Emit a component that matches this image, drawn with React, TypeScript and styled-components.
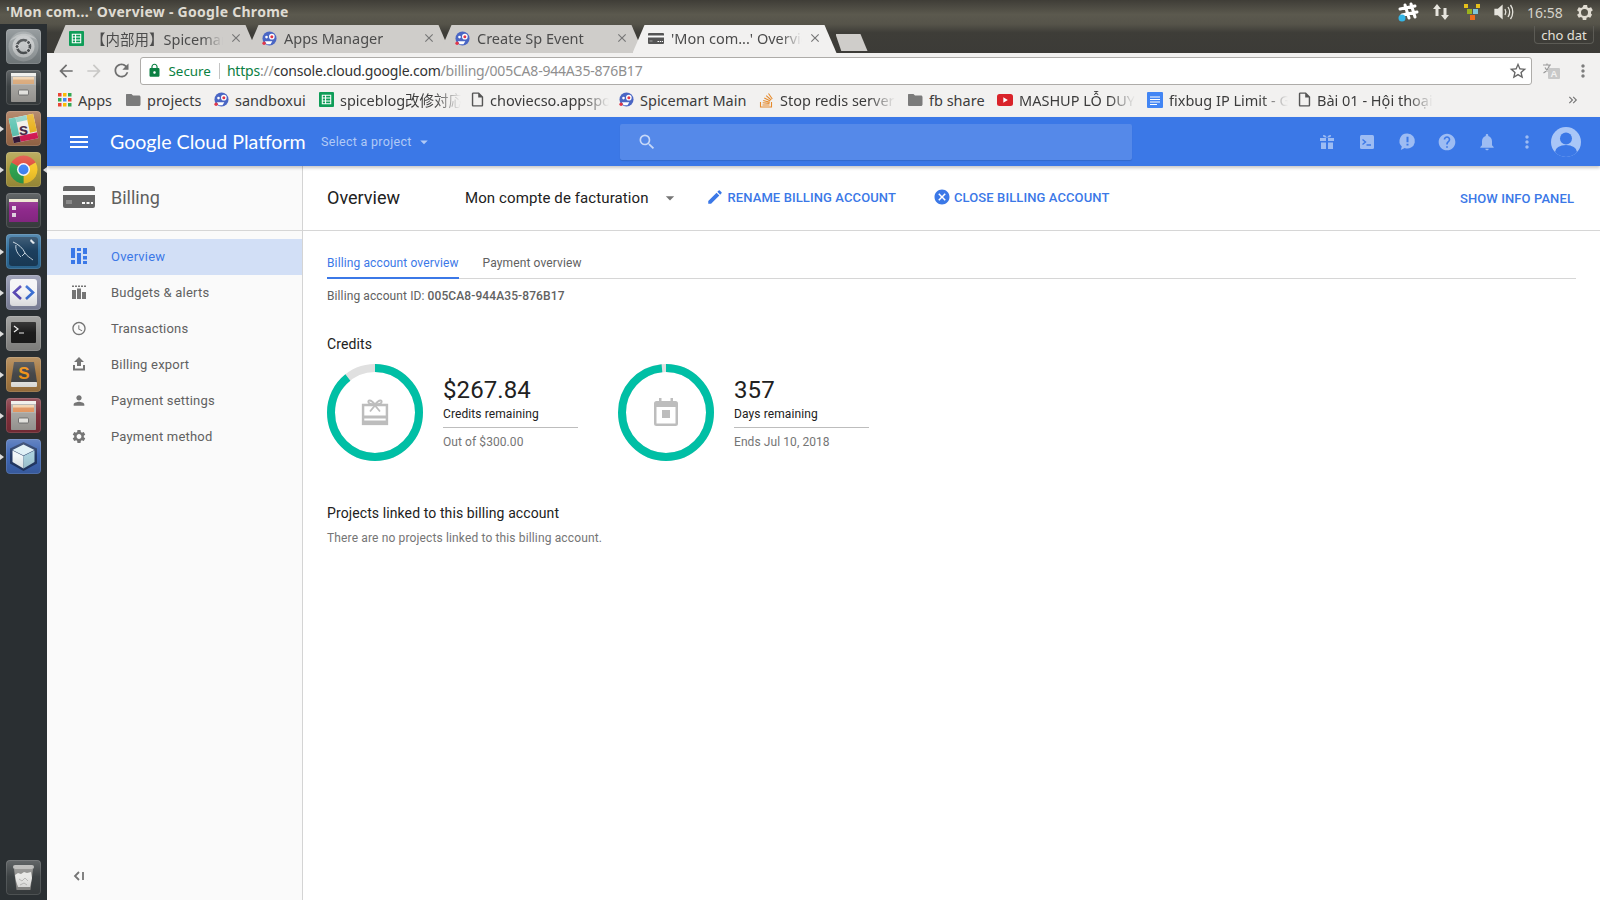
import React from "react";
import styled, { createGlobalStyle } from "styled-components";
import {
  MdMenu, MdSearch, MdNotifications, MdHelp, MdMoreVert, MdPerson, MdSettings, MdAccessTime,
  MdEdit, MdCancel, MdArrowDropDown, MdStarBorder, MdLock, MdArrowBack, MdArrowForward, MdRefresh,
  MdFolder, MdClose, MdKeyboardDoubleArrowRight, MdOutlineInsertDriveFile,
} from "react-icons/md";

const Global = createGlobalStyle`
  html, body { margin: 0; padding: 0; width: 1600px; height: 900px; overflow: hidden; background: #fff; }
  * { box-sizing: border-box; }
  #root { width: 1600px; height: 900px; }
`;

const UI = `"Noto Sans", "Noto Sans CJK SC", "Open Sans", sans-serif`;
const RB = `Roboto, "Liberation Sans", sans-serif`;

const Page = styled.div`display: flex; flex-direction: column; width: 1600px; height: 900px; overflow: hidden;`;
const TitleBar = styled.div`
  height: 24px; flex: none; display: flex; align-items: center; padding: 0 1px 2px 6px;
  background: linear-gradient(#3f3d37, #5b594e 60%, #56544a);
  color: #dfdbd2; font: 700 14px ${UI}; letter-spacing: .28px;
`;
const WindowTitle = styled.div`flex: 1; white-space: nowrap;`;
const Tray = styled.div`display: flex; align-items: center; width: 208px; flex: none; color: #dfdbd2; letter-spacing: 0; padding-top: 2px;`;
const TraySlot = styled.span<{ $w: number }>`display: flex; justify-content: center; align-items: center; flex: none; width: ${p => p.$w}px;`;
const Clock = styled.span`font: 400 14px ${UI}; color: #d6d3ca; white-space: nowrap;`;
const Body = styled.div`flex: 1; display: flex; min-height: 0;`;
const Launcher = styled.aside`
  width: 47px; flex: none; display: flex; flex-direction: column; align-items: center; gap: 6px;
  padding: 5px 0 5px; background: #2a2f32;
`;
const Tile = styled.div<{ $running?: boolean; $both?: boolean; $end?: boolean }>`
  position: relative; width: 35px; height: 35px; flex: none; ${p => p.$end ? "margin-top: auto;" : ""}
  svg { display: block; border-radius: 4px; }
  &::before {
    content: ${p => p.$running ? '""' : "none"}; position: absolute; left: -6px; top: 15px;
    border: 3px solid transparent; border-left: 4px solid #ddd; border-right: 0;
  }
  &::after {
    content: ${p => p.$both ? '""' : "none"}; position: absolute; right: -6px; top: 15px;
    border: 3px solid transparent; border-right: 4px solid #ddd; border-left: 0;
  }
`;
const TileGloss = styled.span`
  position: absolute; inset: 0; border-radius: 4px; pointer-events: none;
  background: linear-gradient(rgba(255,255,255,.2), rgba(255,255,255,0) 48%, rgba(0,0,0,.14));
  box-shadow: inset 0 0 0 1px rgba(255,255,255,.12);
`;
const Main = styled.div`flex: 1; min-width: 0; display: flex; flex-direction: column;`;
const TabStrip = styled.div`
  height: 29px; flex: none; display: flex; align-items: flex-end; padding-left: 6.5px;
  background: linear-gradient(#56544a, #3e3d38 30%, #3c3b37);
`;
const Tab = styled.div<{ $active?: boolean }>`
  width: 204px; height: 28px; flex: none; margin-right: -11px; display: flex; align-items: center;
  padding: 0 15px 2px 15.5px; position: relative; z-index: ${p => p.$active ? 2 : 1};
  background: ${p => p.$active ? "#f2f1f0" : "#cfcdca"};
  clip-path: polygon(0 100%, 12px 0, calc(100% - 12px) 0, 100% 100%);
  color: #4c4c4c; font: 400 14.5px ${UI};
`;
const TabTitle = styled.span`
  flex: 1; min-width: 0; margin: 0 6px 0 7px; white-space: nowrap; overflow: hidden;
  mask-image: linear-gradient(to right, #000 84%, transparent 100%);
`;
const TabClose = styled.span`display: flex; width: 14px; color: #777; flex: none;`;
const NewTab = styled.div`
  width: 32px; height: 17px; flex: none; margin: 0 0 2px 10px; background: #cfcdca;
  clip-path: polygon(0 0, 78% 0, 100% 100%, 18% 100%); align-self: flex-end;
`;
const UserBox = styled.div`
  margin-left: auto; margin-right: 6px; align-self: flex-start; margin-top: 2px; width: 60px; height: 18px; flex: none;
  border: 1px solid #5c5b55; border-top: 0; border-radius: 0 0 4px 4px;
  display: flex; align-items: center; justify-content: center; color: #e4e1da; font: 400 13px ${UI};
`;
const Toolbar = styled.div`
  height: 35px; flex: none; display: flex; align-items: center; padding: 0 0 0 4.5px; background: #f2f1f0;
`;
const NavBtn = styled.span<{ $dim?: boolean }>`display: flex; justify-content: center; width: 28px; flex: none; color: ${p => p.$dim ? "#c9c8c6" : "#6f6f6f"};`;
const Omnibox = styled.div`
  flex: none; width: 1392px; height: 28px; margin-left: 4px; display: flex; align-items: center;
  background: #fff; border: 1px solid #aeaca9; border-radius: 3px; padding: 0 3px 0 6px;
  font: 400 14px ${UI}; white-space: nowrap;
`;
const Secure = styled.span`color: #0b8043; margin-left: 7px; font-size: 13.4px;`;
const Sep = styled.span`width: 1px; height: 16px; background: #c4c4c4; margin: 0 7px 0 8px; flex: none;`;
const Url = styled.span`flex: 1; color: #8f8f8f; letter-spacing: -.2px;`;
const UrlGreen = styled.span`color: #0b8043;`;
const UrlDark = styled.span`color: #333;`;
const ToolRight = styled.span<{ $gap?: number }>`display: flex; justify-content: center; flex: none; width: 32px; color: #7d7d7d; margin-left: ${p => p.$gap ?? 0}px;`;
const Bookmarks = styled.div`
  height: 29px; flex: none; display: flex; align-items: center; padding: 0 0 6px 11px; background: #f2f1f0;
  font: 400 14.5px ${UI}; color: #3c3c3c;
`;
const Bookmark = styled.div<{ $w: number }>`display: flex; align-items: center; gap: 6px; width: ${p => p.$w}px; flex: none; overflow: hidden; padding-right: 10px;`;
const BookmarkText = styled.span<{ $fade?: boolean }>`
  white-space: nowrap; overflow: hidden; min-width: 0;
  ${p => p.$fade ? "mask-image: linear-gradient(to right, #000 78%, transparent 100%);" : ""}
`;
const BookmarkMore = styled.span`margin-left: auto; margin-right: 20px; display: flex; color: #777;`;
const CloudBar = styled.header`
  height: 49px; flex: none; display: flex; align-items: center; background: #3b78e7; position: relative; z-index: 3;
  box-shadow: 0 2px 3px rgba(0,0,0,.22); color: #fff;
`;
const Burger = styled.span`display: flex; width: 63px; flex: none; justify-content: center; color: #fff;`;
const Logo = styled.div`font: 400 19.6px Lato, sans-serif; width: 211px; flex: none; white-space: nowrap;`;
const ProjectPicker = styled.div`display: flex; align-items: center; gap: 3px; width: 299px; flex: none; color: #b1caf6; font: 400 12.5px ${RB}; letter-spacing: .3px;`;
const SearchBox = styled.div`
  width: 512px; height: 36px; flex: none; background: #5589e9; border-radius: 2px; display: flex; align-items: center;
  padding-left: 17px; color: #c6d8f8; box-shadow: 0 1px 1px rgba(0,0,0,.12);
`;
const CloudIcons = styled.div`flex: 1; display: flex; align-items: center; justify-content: flex-end; padding-right: 20px; color: #9dbcf3;`;
const CloudIcon = styled.span`display: flex; width: 40px; justify-content: center; flex: none;`;
const Avatar = styled.span`display: flex; margin-left: 4px; flex: none; width: 30px; height: 30px; margin-right: -1px;`;
const Workspace = styled.div`flex: 1; min-height: 0; display: flex;`;
const Sidebar = styled.nav`
  width: 256px; flex: none; display: flex; flex-direction: column; background: #fafafa; border-right: 1px solid #d4d4d4;
`;
const SideHead = styled.div`
  height: 65px; flex: none; display: flex; align-items: center; gap: 16px; padding: 0 0 2px 16px;
  border-bottom: 1px solid #d6d6d6; color: #5f5f5f; font: 400 18px ${RB};
`;
const SideList = styled.div`display: flex; flex-direction: column; padding-top: 8px;`;
const SideItem = styled.div<{ $active?: boolean }>`
  height: 36px; display: flex; align-items: center; padding: 0 0 2px 24px; gap: 24px;
  background: ${p => p.$active ? "#d2dff6" : "transparent"};
  color: ${p => p.$active ? "#3b78e7" : "#616161"}; font: 400 13px ${RB}; letter-spacing: .2px;
`;
const SideIcon = styled.span<{ $active?: boolean }>`display: flex; width: 16px; height: 16px; flex: none; color: ${p => p.$active ? "#3b78e7" : "#757575"};`;
const Collapse = styled.div`margin-top: auto; height: 31px; display: flex; align-items: flex-start; padding: 0 0 0 25px; color: #757575;`;
const Content = styled.main`flex: 1; min-width: 0; display: flex; flex-direction: column;`;
const PageHead = styled.div`
  height: 65px; flex: none; display: flex; align-items: center; padding: 0 26px 2px 24px; border-bottom: 1px solid #d6d6d6;
`;
const PageTitle = styled.h1`margin: 0; width: 138px; flex: none; font: 400 18px ${RB}; color: #212121;`;
const Account = styled.div`display: flex; align-items: center; width: 241px; flex: none; padding-top: 2px; font: 400 15px ${RB}; color: #212121; letter-spacing: .1px;`;
const Caret = styled.span`display: flex; margin-left: 11px; color: #757575;`;
const HeadAction = styled.div<{ $w: number }>`
  display: flex; align-items: center; gap: 3.5px; width: ${p => p.$w}px; flex: none;
  color: #3b78e7; font: 500 13px ${RB}; letter-spacing: .1px; white-space: nowrap;
`;
const InfoPanel = styled.div`margin-left: auto; color: #3b78e7; font: 500 13px ${RB}; letter-spacing: .1px; white-space: nowrap; padding-top: 2px;`;
const Pane = styled.div`padding: 0 24px;`;
const TabBar = styled.div`
  height: 48px; display: flex; align-items: flex-end; gap: 24px; border-bottom: 1px solid #d6d6d6; font: 400 12px ${RB}; letter-spacing: .12px;
`;
const SubTab = styled.div<{ $active?: boolean }>`
  height: 30px; padding-top: 7px; margin-bottom: -1px; color: ${p => p.$active ? "#3b78e7" : "#616161"};
  border-bottom: 2px solid ${p => p.$active ? "#3b78e7" : "transparent"}; white-space: nowrap;
`;
const AccountId = styled.p`margin: 9px 0 0; font: 400 12px/16px ${RB}; color: #616161; letter-spacing: .1px;`;
const AccountIdValue = styled.strong`font-weight: 500;`;
const SectionTitle = styled.h2<{ $top: number }>`margin: ${p => p.$top}px 0 0; font: 400 14px/18px ${RB}; color: #212121; letter-spacing: .1px;`;
const Stats = styled.div`display: flex; margin-top: 11px; gap: 0;`;
const Stat = styled.div`display: flex; width: 291px; flex: none; align-items: flex-start; gap: 20px;`;
const Ring = styled.div`position: relative; width: 96px; height: 97px; flex: none;`;
const RingGlyph = styled.span`
  position: absolute; left: 50%; top: 49%; transform: translate(-50%, -50%); display: flex; color: #bdbdbd;
`;
const StatText = styled.div`width: 135px; padding-top: 12px; flex: none;`;
const StatValue = styled.div`font: 400 24px/28px ${RB}; color: #212121; letter-spacing: .1px;`;
const StatLabel = styled.div`font: 400 12px/16px ${RB}; color: #212121; padding: 2px 0 5px; border-bottom: 1px solid #bdbdbd; letter-spacing: .1px;`;
const StatNote = styled.div`font: 400 12px/16px ${RB}; color: #757575; margin-top: 6px; letter-spacing: .08px;`;
const Empty = styled.p`margin: 8px 0 0; font: 400 12px/16px ${RB}; color: #757575; letter-spacing: .14px;`;

function Spice({ size = 15 }: { size?: number }) {
  return (
    <svg width={size} height={size} viewBox="0 0 16 16" style={{ flex: "none" }}>
      <circle cx="8" cy="8" r="7.5" fill="#4a66c4" />
      <circle cx="10.5" cy="6" r="3" fill="#fff" />
      <circle cx="10.5" cy="6" r="1.6" fill="#e0364a" />
      <circle cx="4.8" cy="6.5" r="1.4" fill="#fff" />
      <path d="M3 11h8l-2 3H5z" fill="#fff" />
      <circle cx="2.2" cy="13" r="1.8" fill="#e0364a" />
    </svg>
  );
}
function Sheet({ size = 15 }: { size?: number }) {
  return (
    <svg width={size} height={size} viewBox="0 0 16 16" style={{ flex: "none" }}>
      <rect width="16" height="16" fill="#0f9d58" rx="1" />
      <path d="M3.500 3.500h9v9h-9zM3.500 6.500h9M3.500 9.500h9M7 3.500v9" stroke="#fff" fill="none" strokeWidth="1.100" />
    </svg>
  );
}
function CardIcon({ w, h, fill }: { w: number; h: number; fill: string }) {
  return (
    <svg width={w} height={h} viewBox="0 0 32 22" style={{ flex: "none" }}>
      <rect width="32" height="22" rx="2" fill={fill} />
      <rect y="5" width="32" height="4" fill="#fafafa" />
      <rect x="3" y="14" width="6" height="4" fill="#fafafa" opacity=".25" />
      <path d="M19 16h3v2h-3zM23.500 16h3v2h-3zM28 16h2v2h-2z" fill="#fafafa" />
    </svg>
  );
}
function Cabinet({ bg, top }: { bg: string; top: string }) {
  return (
    <svg width="35" height="35" viewBox="0 0 35 35">
      <rect width="35" height="35" rx="4" fill={bg} />
      <rect x="5" y="3" width="25" height="29" rx="2" fill="#b4b2ae" />
      <rect x="5" y="3" width="25" height="3" fill="#efeeea" />
      <rect x="7" y="7" width="21" height="7" fill={top} />
      <path d="M7 7h21v2.500H7z" fill="#f1d2ae" />
      <rect x="5" y="15" width="25" height="17" rx="1" fill="#a6a4a0" />
      <rect x="12.500" y="20" width="10" height="5" rx="1" fill="#ecebe7" stroke="#666" strokeWidth=".8" />
    </svg>
  );
}

const launcherIcons: { node: React.ReactNode; run?: boolean; both?: boolean }[] = [
  { node: (
    <svg width="35" height="35" viewBox="0 0 35 35">
      <rect width="35" height="35" rx="4" fill="#80878a" />
      <circle cx="17.500" cy="17.500" r="15" fill="#9aa0a2" />
      <path d="M4 12C10 3 24 2 31 11 24 6 11 7 4 12z" fill="#b9bdbe" />
      <circle cx="17.500" cy="17.500" r="11" fill="#c5c8c9" />
      <circle cx="17.500" cy="17.500" r="6.500" fill="none" stroke="#4e5254" strokeWidth="2.600" />
      <circle cx="22.500" cy="13.500" r="2" fill="#4e5254" stroke="#eee" strokeWidth=".8" />
      <circle cx="22.500" cy="21.500" r="2" fill="#4e5254" stroke="#eee" strokeWidth=".8" />
      <circle cx="11" cy="17.500" r="2" fill="#4e5254" stroke="#eee" strokeWidth=".8" />
    </svg>
  ) },
  { node: <Cabinet bg="#3c4143" top="#d9a878" /> },
  { run: true, node: (
    <svg width="35" height="35" viewBox="0 0 35 35">
      <rect width="35" height="35" rx="4" fill="#a4714f" />
      <g transform="rotate(-12 17.500 17.500)">
        <rect x="5" y="5" width="25" height="25" fill="#f2f0ea" />
        <rect x="5" y="5" width="7" height="18" fill="#62c6b4" />
        <rect x="23" y="5" width="7" height="18" fill="#e9b425" />
        <rect x="12" y="24" width="18" height="6" fill="#df1d5a" />
        <rect x="5" y="24" width="7" height="6" fill="#3b1a3c" />
        <rect x="12" y="5" width="11" height="5" fill="#8dd0c4" />
      </g>
      <text x="17.500" y="24" textAnchor="middle" fontFamily="Liberation Sans" fontWeight="700" fontSize="17" fill="#4a2c4c">s</text>
    </svg>
  ) },
  { both: true, node: (
    <svg width="35" height="35" viewBox="0 0 35 35">
      <rect width="35" height="35" rx="4" fill="#ab9a3f" />
      <path d="M17.500 17.500L5.400 10.500A14 14 0 0 1 29.600 10.500z" fill="#e04a3a" />
      <path d="M17.500 17.500L29.600 10.500A14 14 0 0 1 17.500 31.500z" fill="#f6c82c" />
      <path d="M17.500 17.500L17.500 31.500A14 14 0 0 1 5.400 10.500z" fill="#2fa350" />
      <circle cx="17.500" cy="17.500" r="6.500" fill="#fff" /><circle cx="17.500" cy="17.500" r="5" fill="#4285f4" />
    </svg>
  ) },
  { node: (
    <svg width="35" height="35" viewBox="0 0 35 35">
      <rect width="35" height="35" rx="4" fill="#3f4446" />
      <rect x="3" y="6" width="29" height="23" fill="#8f2a8c" />
      <rect x="3" y="6" width="29" height="3" fill="#ece6cf" />
      <rect x="6" y="13" width="4" height="4" fill="#e6d8e6" /><rect x="6" y="20" width="4" height="4" fill="#e6d8e6" />
    </svg>
  ) },
  { run: true, node: (
    <svg width="35" height="35" viewBox="0 0 35 35">
      <rect width="35" height="35" rx="4" fill="#2f6f9e" />
      <rect x="3" y="3" width="29" height="29" rx="3" fill="#1c3f5e" />
      <path d="M7 8c5 2 10 6 12 11 2 3 4 4 8 7M10 11c-1 5 2 9 5 12M19 19l-3 3" stroke="#c9d6e0" strokeWidth="1" fill="none" />
      <path d="M25 5l4 4-2 1-3-3z" fill="#e0e6ea" />
    </svg>
  ) },
  { run: true, node: (
    <svg width="35" height="35" viewBox="0 0 35 35">
      <rect width="35" height="35" rx="4" fill="#8a8ea8" />
      <rect x="4" y="4" width="27" height="27" rx="3" fill="#f4f4f6" />
      <path d="M15 11l-7 6.500 7 6.500" stroke="#5a49b5" strokeWidth="2.600" fill="none" />
      <path d="M20 11l7 6.500-7 6.500" stroke="#3b6fd4" strokeWidth="2.600" fill="none" />
    </svg>
  ) },
  { run: true, node: (
    <svg width="35" height="35" viewBox="0 0 35 35">
      <rect width="35" height="35" rx="4" fill="#8f8f8d" />
      <rect x="5" y="6" width="25" height="21" rx="1" fill="#1c1c1c" />
      <path d="M8 10l4 3-4 3" stroke="#eee" strokeWidth="1.200" fill="none" /><path d="M13 17h5" stroke="#eee" strokeWidth="1.200" />
    </svg>
  ) },
  { run: true, node: (
    <svg width="35" height="35" viewBox="0 0 35 35">
      <rect width="35" height="35" rx="4" fill="#a87b43" />
      <rect x="5" y="25" width="26" height="5" rx="1" fill="#f0efec" />
      <path d="M8 5h20l3 20H5z" fill="#46484a" />
      <text x="18" y="22" textAnchor="middle" fontFamily="Liberation Sans" fontWeight="700" fontSize="17" fill="#f29318">S</text>
    </svg>
  ) },
  { run: true, node: <Cabinet bg="#7f2f3a" top="#e0925c" /> },
  { run: true, node: (
    <svg width="35" height="35" viewBox="0 0 35 35">
      <rect width="35" height="35" rx="4" fill="#3f67b4" />
      <path d="M17.500 3L31 9.500v15L17.500 32 4 24.500v-15z" fill="#243a66" />
      <path d="M17.500 5.500L28.500 11l-11 5.500-11-5.500z" fill="#dff0f6" />
      <path d="M6.500 11.500l11 5.500v12.500l-11-6.500z" fill="#f1f6f8" />
      <path d="M28.500 11.500l-11 5.500v12.500l11-6.500z" fill="#a9d0dc" />
    </svg>
  ) },
];

const tabs = [
  { icon: <Sheet />, title: "【内部用】Spicemart" },
  { icon: <Spice />, title: "Apps Manager" },
  { icon: <Spice />, title: "Create Sp Event" },
  { icon: <CardIcon w={16} h={11} fill="#555" />, title: "'Mon com...' Overview", active: true },
];

const FileIcon = () => <MdOutlineInsertDriveFile size={17} color="#555" style={{ flex: "none", margin: "0 -2px 0 -2px" }} />;
const FolderIcon = () => <MdFolder size={18} color="#7b7b7b" style={{ flex: "none", margin: "0 -1px 0 -2px" }} />;
const AppsGrid = () => (
  <svg width="14" height="14" viewBox="0 0 14 14" style={{ flex: "none" }}>
    {[0, 5, 10].map(y => [0, 5, 10].map(x => (
      <rect key={`${x}${y}`} x={x} y={y} width="3.500" height="3.500"
        fill={["#ea4335", "#fbbc05", "#34a853", "#4285f4"][(x + y * 2) % 4]} />
    )))}
  </svg>
);
const StackIcon = () => (
  <svg width="15" height="16" viewBox="0 0 15 16" style={{ flex: "none" }}>
    <path d="M1.500 10v5h11v-5M3.500 13h7M3.700 10.800l6.800.6M4.200 8.500l6.600 1.700M5.300 6l6 3M7.200 3.700l5 4.300M9.500 1.500l3.800 5.500" stroke="#e58a2d" strokeWidth="1.100" fill="none" />
  </svg>
);
const YouTube = () => (
  <svg width="16" height="12" viewBox="0 0 16 12" style={{ flex: "none" }}>
    <rect width="16" height="12" rx="2.500" fill="#d9232a" /><path d="M6.300 3.200l4.500 2.800-4.500 2.800z" fill="#fff" />
  </svg>
);
const DocIcon = () => (
  <svg width="16" height="16" viewBox="0 0 16 16" style={{ flex: "none" }}>
    <rect width="16" height="16" fill="#4285f4" rx="1" /><path d="M3 5h10M3 7.500h10M3 10h10M3 12.500h7" stroke="#fff" />
  </svg>
);

const bookmarks = [
  { icon: <AppsGrid />, text: "Apps", w: 68 },
  { icon: <FolderIcon />, text: "projects", w: 88 },
  { icon: <Spice />, text: "sandboxui", w: 105 },
  { icon: <Sheet />, text: "spiceblog改修対応", w: 152, fade: true },
  { icon: <FileIcon />, text: "choviecso.appspot", w: 148, fade: true },
  { icon: <Spice />, text: "Spicemart Main", w: 140 },
  { icon: <StackIcon />, text: "Stop redis server", w: 149, fade: true },
  { icon: <FolderIcon />, text: "fb share", w: 89 },
  { icon: <YouTube />, text: "MASHUP LỖ DUY", w: 150, fade: true },
  { icon: <DocIcon />, text: "fixbug IP Limit - Google", w: 151, fade: true },
  { icon: <FileIcon />, text: "Bài 01 - Hội thoại", w: 147, fade: true },
];

const GiftFilled = () => (
  <svg width="20" height="20" viewBox="0 0 20 20" fill="currentColor">
    <path d="M3 6h6v3H3zM11 6h6v3h-6zM4 10.500h5V17H4zM11 10.500h5V17h-5z" />
    <path d="M10 5.500C8 2 5.500 2.500 6 4.300 6.300 5.300 8 5.500 10 5.500zM10 5.500c2-3.500 4.500-3 4-1.200-.3 1-2 1.200-4 1.200z" />
  </svg>
);
const TerminalFilled = () => (
  <svg width="20" height="20" viewBox="0 0 20 20">
    <rect x="3" y="3" width="14" height="14" rx="1.500" fill="currentColor" />
    <path d="M5.500 7.500l3 2.500-3 2.500M9.500 13h4.500" stroke="#3b78e7" strokeWidth="1.400" fill="none" />
  </svg>
);
const FeedbackBubble = () => (
  <svg width="21" height="21" viewBox="0 0 21 21">
    <path d="M10.500 2.500a7.500 7.500 0 1 1-2.800 14.500L3.800 19l1-3.600A7.500 7.500 0 0 1 10.500 2.500z" fill="currentColor" />
    <path d="M10.500 5.800v5.400M10.500 12.700v1.800" stroke="#3b78e7" strokeWidth="2" />
  </svg>
);
const Dash = () => (
  <svg width="16" height="16" viewBox="0 0 16 16" fill="currentColor">
    <path d="M0 0h4v10H0zM0 12h4v4H0zM6 0h4v3H6zM6 5h4v11H6zM12 0h4v6h-4zM12 8h4v3.500h-4zM12 13h4v3h-4z" />
  </svg>
);
const Budgets = () => (
  <svg width="16" height="16" viewBox="0 0 16 16" fill="currentColor">
    <path d="M1 6h4v9H1zM6 4.500h4V15H6zM11 8h4v7h-4z" />
    <path d="M1 1.500h2v1.500H1zM4 1.500h2v1.500H4zM7 1.500h2v1.500H7zM10 1.500h2v1.500h-2zM13 1.500h2v1.500h-2z" />
  </svg>
);
const Upload = () => (
  <svg width="16" height="16" viewBox="0 0 16 16" fill="currentColor">
    <path d="M8 1l5 5h-3v4H6V6H3zM2 9h2v3.500h8V9h2v5.500H2z" />
  </svg>
);
const GiftCard = () => (
  <svg width="27" height="27" viewBox="0 0 27 27">
    <path d="M1.500 6.500h24v19h-24z" fill="none" stroke="currentColor" strokeWidth="2.600" />
    <rect x="1" y="17" width="25" height="3" fill="currentColor" /><rect x="1" y="22" width="25" height="4" fill="currentColor" />
    <path d="M8.500 13l5-6 5 6M13.500 6C9 .5 6 1.500 7 4c.6 1.300 3.500 2 6.500 2zM13.500 6c4.500-5.500 7.500-4.500 6.500-2-.6 1.300-3.500 2-6.500 2z" fill="none" stroke="currentColor" strokeWidth="1.800" />
  </svg>
);
const CalendarGlyph = () => (
  <svg width="24" height="28" viewBox="0 0 24 28" fill="currentColor">
    <path d="M5 0h2.500v3h9V0H19v3h2.500A2.500 2.500 0 0 1 24 5.500v20a2.500 2.500 0 0 1-2.500 2.500h-19A2.500 2.500 0 0 1 0 25.500v-20A2.500 2.500 0 0 1 2.500 3H5zM2.500 9v16.500h19V9z" fillRule="evenodd" />
    <rect x="8" y="12" width="8" height="8" />
  </svg>
);
const TranslateGlyph = () => (
  <svg width="20" height="18" viewBox="0 0 20 18">
    <path d="M2 3h8M6 1.500V3M8.500 3C7.500 7 5 9.500 2.500 11M4 5.500c1 2 2.500 3.500 4 4.500" stroke="#9a9a9a" strokeWidth="1.200" fill="none" />
    <rect x="7" y="6" width="12" height="11" rx="1" fill="#c8c8c8" />
    <text x="13" y="15" textAnchor="middle" fontFamily="Liberation Sans" fontWeight="700" fontSize="9.500" fill="#f2f1f0">A</text>
  </svg>
);

function Donut({ used, total }: { used: number; total: number }) {
  const r = 44;
  const c = 2 * Math.PI * r;
  const teal = (used / total) * c;
  return (
    <svg width="96" height="97" viewBox="0 0 96 96" preserveAspectRatio="none">
      <circle cx="48" cy="48" r={r} fill="none" stroke="#e0e0e0" strokeWidth="8" />
      <circle cx="48" cy="48" r={r} fill="none" stroke="#00bfa5" strokeWidth="8"
        strokeDasharray={`${teal} ${c - teal}`} transform="rotate(-90 48 48)" />
    </svg>
  );
}

const sideItems = [
  { icon: <Dash />, label: "Overview", active: true },
  { icon: <Budgets />, label: "Budgets & alerts" },
  { icon: <MdAccessTime size={17} />, label: "Transactions" },
  { icon: <Upload />, label: "Billing export" },
  { icon: <MdPerson size={17} />, label: "Payment settings" },
  { icon: <MdSettings size={17} />, label: "Payment method" },
];

export default function App() {
  return (
    <Page>
      <Global />
      <TitleBar>
        <WindowTitle>'Mon com...' Overview - Google Chrome</WindowTitle>
        <Tray>
          <TraySlot $w={33}>
            <svg width="22" height="20" viewBox="0 0 22 20">
              <g stroke="#fff" strokeWidth="3" strokeLinecap="round" fill="none">
                <path d="M8 3l4 13M14 2l4 13M3 7l15 -3M5 13l15 -3" />
              </g>
              <circle cx="5" cy="16" r="3.500" fill="#35b6e6" />
            </svg>
          </TraySlot>
          <TraySlot $w={33}>
            <svg width="18" height="18" viewBox="0 0 18 18" fill="#e6e4dd">
              <path d="M5 1l4 5H6.500v7h-3V6H1zM13 17l-4-5h2.500V5h3v7H17z" />
            </svg>
          </TraySlot>
          <TraySlot $w={29}>
            <svg width="16" height="16" viewBox="0 0 16 16">
              <rect x="0" y="0" width="4" height="4" fill="#e5c01c" /><rect x="12" y="0" width="4" height="4" fill="#e5c01c" />
              <rect x="3" y="5" width="5" height="5" fill="#9ab21d" /><rect x="9" y="5" width="5" height="5" fill="#7ec4d8" />
              <rect x="6" y="11" width="5" height="5" fill="#ec6b1b" />
            </svg>
          </TraySlot>
          <TraySlot $w={35}>
            <svg width="20" height="18" viewBox="0 0 20 18" fill="none" stroke="#e6e4dd" strokeWidth="1.300">
              <path d="M1 6.500h3l4-3.500v12l-4-3.500H1z" fill="#e6e4dd" />
              <path d="M11 6c1 1.800 1 4.200 0 6M14 4c2 3 2 7 0 10M16.500 2c3 4 3 10 0 14" />
            </svg>
          </TraySlot>
          <TraySlot $w={48}><Clock>16:58</Clock></TraySlot>
          <TraySlot $w={30}>
            <svg width="21" height="21" viewBox="0 0 24 24" fill="#e0dcd2">
              <path d="M19.400 13c0-.3.1-.6.1-1s0-.7-.1-1l2.100-1.600-2-3.500-2.500 1a7 7 0 0 0-1.700-1L15 3.300h-4L9.700 5.900a7 7 0 0 0-1.700 1l-2.500-1-2 3.500L5.600 11a6 6 0 0 0 0 2l-2.100 1.600 2 3.500 2.500-1c.5.400 1.100.7 1.700 1L10 20.700h4l.4-2.600c.6-.3 1.200-.6 1.700-1l2.500 1 2-3.500zM12 16a4 4 0 1 1 0-8 4 4 0 0 1 0 8z" />
            </svg>
          </TraySlot>
        </Tray>
      </TitleBar>
      <Body>
        <Launcher>
          {launcherIcons.map((it, i) => (
            <Tile key={i} $running={it.run || it.both} $both={it.both}>{it.node}<TileGloss /></Tile>
          ))}
          <Tile $end>
            <svg width="35" height="35" viewBox="0 0 35 35">
              <rect width="35" height="35" rx="4" fill="#3d4244" />
              <path d="M8 9h19l-2.500 21h-14z" fill="#8f8f8d" />
              <rect x="7" y="5" width="21" height="4" rx="2" fill="#b8b8b6" />
              <path d="M9 15l3-2 3 1 3-2 3 1 4-1 1 6-2 9H12l-2-6z" fill="#e9e9e7" />
              <path d="M13 19l3 2 3-3 3 3M14 25l4-2 3 2" stroke="#bdbdbb" strokeWidth="1" fill="none" />
            </svg>
            <TileGloss />
          </Tile>
        </Launcher>
        <Main>
          <TabStrip>
            {tabs.map(t => (
              <Tab key={t.title} $active={t.active}>
                {t.icon}
                <TabTitle>{t.title}</TabTitle>
                <TabClose><MdClose size={14} /></TabClose>
              </Tab>
            ))}
            <NewTab />
            <UserBox>cho dat</UserBox>
          </TabStrip>
          <Toolbar>
            <NavBtn><MdArrowBack size={20} /></NavBtn>
            <NavBtn $dim><MdArrowForward size={20} /></NavBtn>
            <NavBtn><MdRefresh size={21} /></NavBtn>
            <Omnibox>
              <MdLock size={15} color="#0b8043" />
              <Secure>Secure</Secure>
              <Sep />
              <Url><UrlGreen>https</UrlGreen>://<UrlDark>console.cloud.google.com</UrlDark>/billing/005CA8-944A35-876B17</Url>
              <MdStarBorder size={20} color="#666" />
            </Omnibox>
            <ToolRight $gap={3}><TranslateGlyph /></ToolRight>
            <ToolRight><MdMoreVert size={20} /></ToolRight>
          </Toolbar>
          <Bookmarks>
            {bookmarks.map(b => (
              <Bookmark key={b.text} $w={b.w}>
                {b.icon}
                <BookmarkText $fade={b.fade}>{b.text}</BookmarkText>
              </Bookmark>
            ))}
            <BookmarkMore><MdKeyboardDoubleArrowRight size={14} /></BookmarkMore>
          </Bookmarks>
          <CloudBar>
            <Burger><MdMenu size={24} /></Burger>
            <Logo>Google Cloud Platform</Logo>
            <ProjectPicker>Select a project<MdArrowDropDown size={18} /></ProjectPicker>
            <SearchBox><MdSearch size={20} /></SearchBox>
            <CloudIcons>
              <CloudIcon><GiftFilled /></CloudIcon>
              <CloudIcon><TerminalFilled /></CloudIcon>
              <CloudIcon><FeedbackBubble /></CloudIcon>
              <CloudIcon><MdHelp size={20} /></CloudIcon>
              <CloudIcon><MdNotifications size={20} /></CloudIcon>
              <CloudIcon><MdMoreVert size={20} /></CloudIcon>
              <Avatar>
                <svg width="30" height="30" viewBox="0 0 30 30">
                  <defs><clipPath id="av"><circle cx="15" cy="15" r="15" /></clipPath></defs>
                  <circle cx="15" cy="15" r="15" fill="#a9c6f7" />
                  <g clipPath="url(#av)">
                    <circle cx="15" cy="11.500" r="6" fill="#3b78e7" />
                    <ellipse cx="15" cy="25" rx="11" ry="7" fill="#3b78e7" />
                  </g>
                </svg>
              </Avatar>
            </CloudIcons>
          </CloudBar>
          <Workspace>
            <Sidebar>
              <SideHead><CardIcon w={32} h={22} fill="#666" />Billing</SideHead>
              <SideList>
                {sideItems.map(it => (
                  <SideItem key={it.label} $active={it.active}>
                    <SideIcon $active={it.active}>{it.icon}</SideIcon>
                    {it.label}
                  </SideItem>
                ))}
              </SideList>
              <Collapse>
                <svg width="14" height="14" viewBox="0 0 14 14" fill="none" stroke="currentColor" strokeWidth="1.800">
                  <path d="M7 3L3 7l4 4M11 3v8" />
                </svg>
              </Collapse>
            </Sidebar>
            <Content>
              <PageHead>
                <PageTitle>Overview</PageTitle>
                <Account>Mon compte de facturation<Caret><MdArrowDropDown size={20} /></Caret></Account>
                <HeadAction $w={226.5}><MdEdit size={18} />RENAME BILLING ACCOUNT</HeadAction>
                <HeadAction $w={190}><MdCancel size={18} />CLOSE BILLING ACCOUNT</HeadAction>
                <InfoPanel>SHOW INFO PANEL</InfoPanel>
              </PageHead>
              <Pane>
                <TabBar>
                  <SubTab $active>Billing account overview</SubTab>
                  <SubTab>Payment overview</SubTab>
                </TabBar>
                <AccountId>Billing account ID: <AccountIdValue>005CA8-944A35-876B17</AccountIdValue></AccountId>
                <SectionTitle $top={31}>Credits</SectionTitle>
                <Stats>
                  <Stat>
                    <Ring><Donut used={267.84} total={300} /><RingGlyph><GiftCard /></RingGlyph></Ring>
                    <StatText>
                      <StatValue>$267.84</StatValue>
                      <StatLabel>Credits remaining</StatLabel>
                      <StatNote>Out of $300.00</StatNote>
                    </StatText>
                  </Stat>
                  <Stat>
                    <Ring><Donut used={357} total={363} /><RingGlyph><CalendarGlyph /></RingGlyph></Ring>
                    <StatText>
                      <StatValue>357</StatValue>
                      <StatLabel>Days remaining</StatLabel>
                      <StatNote>Ends Jul 10, 2018</StatNote>
                    </StatText>
                  </Stat>
                </Stats>
                <SectionTitle $top={43}>Projects linked to this billing account</SectionTitle>
                <Empty>There are no projects linked to this billing account.</Empty>
              </Pane>
            </Content>
          </Workspace>
        </Main>
      </Body>
    </Page>
  );
}
